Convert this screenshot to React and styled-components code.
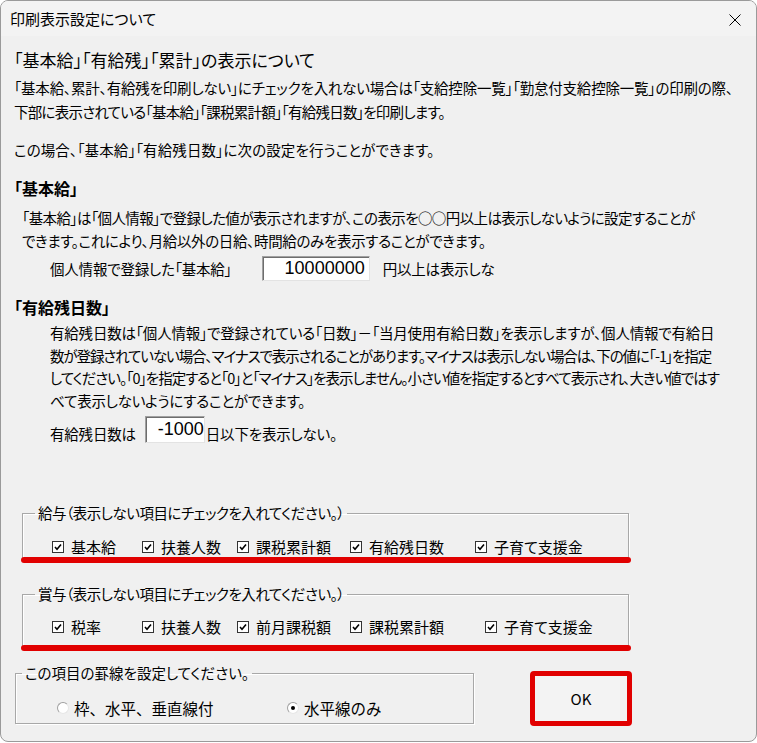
import React from "react";
import styled, { createGlobalStyle } from "styled-components";

const GlobalStyle = createGlobalStyle`
  html, body {
    margin: 0;
    padding: 0;
    background: #ffffff;
  }
  body {
    font-family: "Noto Sans CJK JP", "Noto Sans", sans-serif;
    color: #000;
  }
`;

const Window = styled.div`
  box-sizing: border-box;
  width: 757px;
  height: 742px;
  border: 1px solid #9a9a9a;
  border-radius: 8px;
  background: #f0f0f0;
  overflow: hidden;
  display: flex;
  flex-direction: column;
  font-feature-settings: "palt";
`;

const TitleBar = styled.div`
  height: 35px;
  flex: none;
  display: flex;
  align-items: center;
  justify-content: space-between;
  padding: 0 15px 0 9px;
  background: #f3f3f3;
`;

const Title = styled.span`
  font-size: 15px;
  line-height: 20px;
`;

const CloseButton = styled.button`
  width: 12px;
  height: 12px;
  padding: 0;
  border: none;
  background: none;
  display: flex;
  margin-top: 2px;
`;

const Content = styled.div`
  padding-left: 13px;
  display: flex;
  flex-direction: column;
  align-items: flex-start;
`;

const Heading = styled.div`
  margin-top: 12px;
  font-size: 17px;
  line-height: 24px;
  white-space: nowrap;
`;

const SectionTitle = styled.div`
  margin-top: ${(p) => p.$mt || 0}px;
  font-size: 16px;
  font-weight: bold;
  line-height: 24px;
`;

const Paragraph = styled.div`
  margin: ${(p) => p.$mt || 0}px 0 0 ${(p) => p.$indent || 0}px;
  font-size: 14.5px;
  line-height: ${(p) => p.$lh || 24}px;
  white-space: nowrap;
`;

const Line = styled.span`
  display: block;
  letter-spacing: ${(p) => (p.$ls === undefined ? -0.2 : p.$ls)}px;
`;

const FieldRow = styled.div`
  margin: ${(p) => p.$mt || 0}px 0 0 ${(p) => p.$indent || 0}px;
  display: flex;
  align-items: ${(p) => p.$align || "center"};
`;

const FieldLabel = styled.span`
  margin-left: ${(p) => p.$ml || 0}px;
  font-size: 14.5px;
  letter-spacing: -0.2px;
  line-height: 18px;
  white-space: nowrap;
`;

const NumberBox = styled.input`
  box-sizing: border-box;
  width: ${(p) => p.$w}px;
  height: ${(p) => p.$h}px;
  margin: 0 0 0 ${(p) => p.$ml || 0}px;
  padding: 0 ${(p) => p.$pr || 0}px 0 0;
  border: 1px solid #a0a0a0;
  border-right-color: #e3e3e3;
  border-bottom-color: #e3e3e3;
  box-shadow: inset 1px 1px 0 #6d6d6d;
  background: #ffffff;
  font-family: "Liberation Sans", Arial, sans-serif;
  font-size: 18px;
  color: #000;
  text-align: right;
  outline: none;
`;

const Group = styled.fieldset`
  position: relative;
  box-sizing: border-box;
  width: ${(p) => p.$w}px;
  margin: ${(p) => p.$mt || 0}px 0 0 ${(p) => p.$ml || 0}px;
  padding: 0;
  border: 1px solid #a8a8a8;
  box-shadow: 1px 1px 0 #ffffff, inset 1px 1px 0 #ffffff;
  min-inline-size: 0;
`;

const Legend = styled.legend`
  margin-left: ${(p) => p.$ml || 0}px;
  padding: 0 3px;
  font-size: ${(p) => p.$size || 15}px;
  letter-spacing: ${(p) => p.$ls || 0}px;
  line-height: 20px;
  white-space: nowrap;
`;

const CheckRow = styled.div`
  display: grid;
  grid-template-columns: ${(p) => p.$cols};
  padding: ${(p) => p.$pt}px 0 ${(p) => p.$pb}px ${(p) => p.$pl}px;
`;

const CheckItem = styled.label`
  display: flex;
  align-items: center;
  gap: 7px;
  font-size: 15px;
  line-height: 22px;
  white-space: nowrap;
`;

const Box = styled.span`
  box-sizing: border-box;
  width: 12px;
  height: 12px;
  border: 1px solid #333333;
  background: #ffffff;
  display: flex;
  align-items: center;
  justify-content: center;
  flex: none;
`;

const RedMark = styled.div`
  position: absolute;
  left: -2px;
  right: -3px;
  bottom: -4px;
  height: 6px;
  border-radius: 3px;
  background: #e10000;
`;

const BottomRow = styled.div`
  margin-top: 15px;
  display: flex;
  align-items: flex-start;
`;

const RadioRow = styled.div`
  display: grid;
  grid-template-columns: 230px auto;
  padding: 14px 0 4px 41px;
`;

const RadioItem = styled.label`
  display: flex;
  align-items: center;
  gap: 5px;
  font-size: 15.5px;
  font-feature-settings: normal;
  line-height: 22px;
  white-space: nowrap;
`;

const RadioDot = styled.span`
  box-sizing: border-box;
  width: 12px;
  height: 12px;
  border-radius: 50%;
  border: 1px solid #a0a0a0;
  border-right-color: #e6e6e6;
  border-bottom-color: #e6e6e6;
  background: #ffffff;
  display: flex;
  align-items: center;
  justify-content: center;
  flex: none;

  &::after {
    content: "";
    width: 4px;
    height: 4px;
    border-radius: 50%;
    background: ${(p) => (p.$on ? "#000" : "transparent")};
  }
`;

const OkFrame = styled.div`
  box-sizing: border-box;
  width: 102px;
  height: 55px;
  margin: 8px 0 0 56px;
  border: 5px solid #e10000;
  border-radius: 4px;
  display: flex;
`;

const OkButton = styled.button`
  flex: 1;
  border: none;
  background: #f3f3f3;
  font-family: "Noto Sans CJK JP", sans-serif;
  font-size: 15px;
  color: #000;
  padding: 0;
`;

function Check({ label }) {
  return (
    <CheckItem>
      <Box>
        <svg width="8" height="8" viewBox="0 0 8 8">
          <polyline points="1,4 3,6.2 7,1.5" fill="none" stroke="#000" strokeWidth="1.6" />
        </svg>
      </Box>
      {label}
    </CheckItem>
  );
}

const salaryItems = ["基本給", "扶養人数", "課税累計額", "有給残日数", "子育て支援金"];
const bonusItems = ["税率", "扶養人数", "前月課税額", "課税累計額", "子育て支援金"];

export default function App() {
  return (
    <>
      <GlobalStyle />
      <Window>
        <TitleBar>
          <Title>印刷表示設定について</Title>
          <CloseButton aria-label="閉じる">
            <svg width="12" height="12" viewBox="0 0 12 12">
              <path d="M0.5 0.5 L11.5 11.5 M11.5 0.5 L0.5 11.5" stroke="#000" strokeWidth="1" />
            </svg>
          </CloseButton>
        </TitleBar>

        <Content>
          <Heading>「基本給」「有給残」「累計」の表示について</Heading>
          <Paragraph $mt={4}>
            <Line>「基本給、累計、有給残を印刷しない」にチェックを入れない場合は「支給控除一覧」「勤怠付支給控除一覧」の印刷の際、</Line>
            <Line $ls={-0.75}>下部に表示されている「基本給」「課税累計額」「有給残日数」を印刷します。</Line>
          </Paragraph>
          <Paragraph $mt={14}>
            <Line $ls={0.1}>この場合、「基本給」「有給残日数」に次の設定を行うことができます。</Line>
          </Paragraph>

          <SectionTitle $mt={14}>「基本給」</SectionTitle>
          <Paragraph $mt={6} $lh={23} $indent={8}>
            <Line $ls={-0.6}>「基本給」は「個人情報」で登録した値が表示されますが、この表示を○○円以上は表示しないように設定することが</Line>
            <Line $ls={-0.35}>できます。これにより、月給以外の日給、時間給のみを表示することができます。</Line>
          </Paragraph>
          <FieldRow $mt={4} $indent={36}>
            <FieldLabel>個人情報で登録した「基本給」</FieldLabel>
            <NumberBox $w={108} $h={25} $ml={30} $pr={4} readOnly value="10000000" />
            <FieldLabel $ml={13}>円以上は表示しな</FieldLabel>
          </FieldRow>

          <SectionTitle $mt={14}>「有給残日数」</SectionTitle>
          <Paragraph $mt={3} $lh={22.5} $indent={36}>
            <Line>有給残日数は「個人情報」で登録されている「日数」－「当月使用有給日数」を表示しますが、個人情報で有給日</Line>
            <Line $ls={-1.1}>数が登録されていない場合、マイナスで表示されることがあります。マイナスは表示しない場合は、下の値に「-1」を指定</Line>
            <Line $ls={-1.0}>してください。「0」を指定すると「0」と「マイナス」を表示しません。小さい値を指定するとすべて表示され、大きい値ではす</Line>
            <Line>べて表示しないようにすることができます。</Line>
          </Paragraph>
          <FieldRow $mt={4} $indent={36} $align="flex-end">
            <FieldLabel>有給残日数は</FieldLabel>
            <NumberBox $w={60} $h={27} $ml={9} readOnly value="-1000" />
            <FieldLabel $ml={1}>日以下を表示しない。</FieldLabel>
          </FieldRow>

          <Group $mt={60} $ml={8} $w={607}>
            <Legend $ml={12} $size={14.5} $ls={-0.5}>給与（表示しない項目にチェックを入れてください。）</Legend>
            <CheckRow $cols="90px 95px 113px 125px auto" $pt={13} $pb={1} $pl={29}>
              {salaryItems.map((item) => (
                <Check key={`salary-${item}`} label={item} />
              ))}
            </CheckRow>
            <RedMark />
          </Group>

          <Group $mt={24} $ml={8} $w={607}>
            <Legend $ml={12} $size={14.5} $ls={-0.5}>賞与（表示しない項目にチェックを入れてください。）</Legend>
            <CheckRow $cols="90px 95px 113px 135px auto" $pt={12} $pb={9} $pl={29}>
              {bonusItems.map((item) => (
                <Check key={`bonus-${item}`} label={item} />
              ))}
            </CheckRow>
            <RedMark />
          </Group>

          <BottomRow>
            <Group $ml={1} $w={459}>
              <Legend $ml={6} $size={14.5}>この項目の罫線を設定してください。</Legend>
              <RadioRow>
                <RadioItem>
                  <RadioDot />
                  枠、水平、垂直線付
                </RadioItem>
                <RadioItem>
                  <RadioDot $on />
                  水平線のみ
                </RadioItem>
              </RadioRow>
            </Group>
            <OkFrame>
              <OkButton>OK</OkButton>
            </OkFrame>
          </BottomRow>
        </Content>
      </Window>
    </>
  );
}
